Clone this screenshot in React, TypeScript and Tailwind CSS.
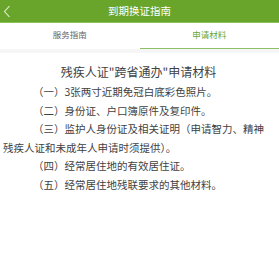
const font = { fontFamily: '"Noto Sans CJK SC", "Noto Sans", sans-serif' };

const items = [
  "（一）3张两寸近期免冠白底彩色照片。",
  "（二）身份证、户口簿原件及复印件。",
  "（三）监护人身份证及相关证明（申请智力、精神残疾人证和未成年人申请时须提供）。",
  "（四）经常居住地的有效居住证。",
  "（五）经常居住地残联要求的其他材料。",
];

export default function App() {
  return (
    <div className="w-[279px] h-[266px] bg-white overflow-hidden" style={font}>
      <div className="relative h-[23px] bg-[#68a52a] border-b border-[#8cc25a] flex items-center justify-center">
        <svg
          className="absolute left-[3px] top-[5px]"
          width="8"
          height="13"
          viewBox="0 0 8 13"
          fill="none"
        >
          <path d="M6.5 1 L1.5 6.5 L6.5 12" stroke="#e4f0d6" strokeWidth="1.1" />
        </svg>
        <span className="text-[10.5px] text-white leading-none">到期换证指南</span>
      </div>
      <div className="flex h-[26px]">
        <div className="flex-1 flex items-center justify-center pb-[3px] text-[8.5px] text-[#666]">
          服务指南
        </div>
        <div className="flex-1 flex items-center justify-center pb-[3px] text-[8.5px] text-[#6aa83a] border-b-[1.5px] border-[#8dbf64]">
          申请材料
        </div>
      </div>
      <div className="h-[4px] bg-[#f6f6f6]" />
      <div className="pl-[3px] pr-[10px] pt-[10px] text-[#3f3f3f]">
        <div className="text-center text-[12px] leading-[18px] pl-[5px]">
          残疾人证"跨省通办"申请材料
        </div>
        <div className="text-[10.5px] leading-[18.5px] mt-[2px]">
          {items.map((t) => (
            <p key={t} className="indent-[30px]">
              {t}
            </p>
          ))}
        </div>
      </div>
    </div>
  );
}
